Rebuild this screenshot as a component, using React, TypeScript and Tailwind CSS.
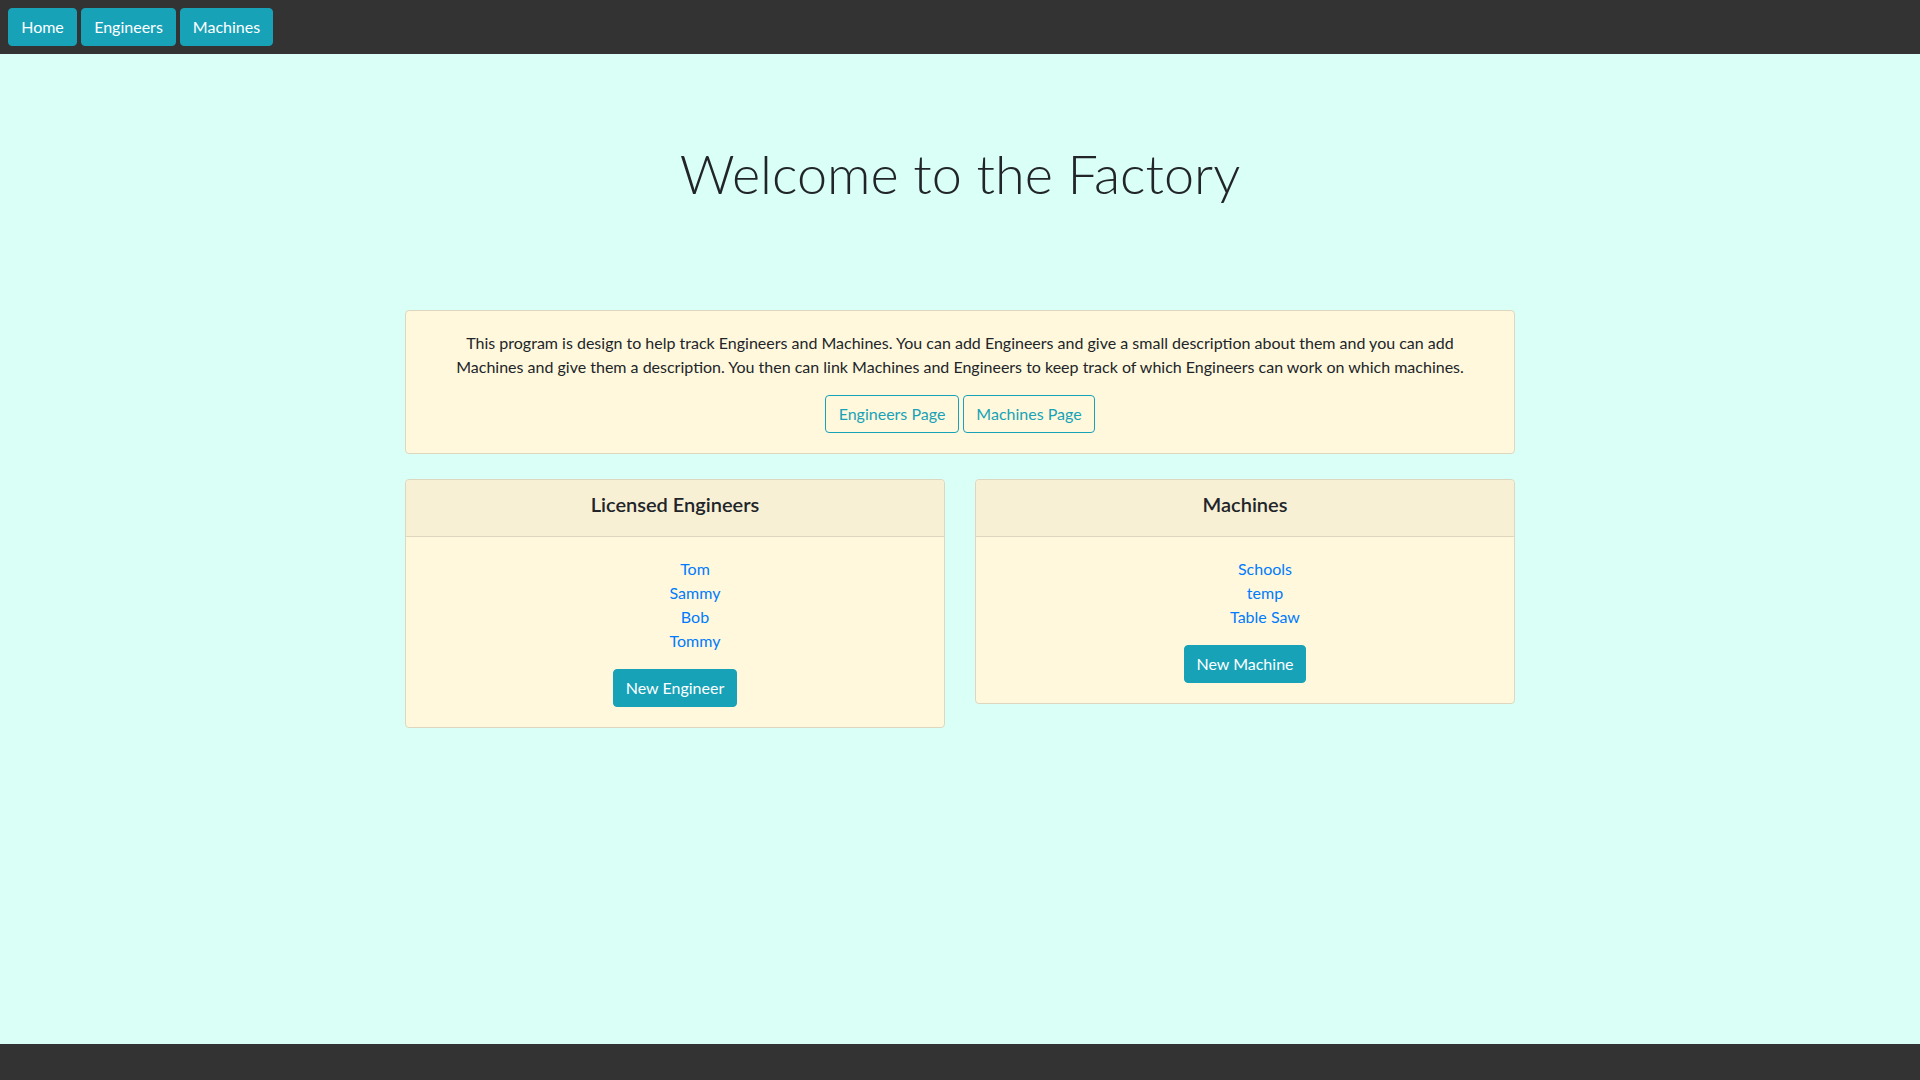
const ENGINEERS = ['Tom', 'Sammy', 'Bob', 'Tommy'];
const MACHINES = ['Schools', 'temp', 'Table Saw'];

const NAV = [
  { label: 'Home', w: 'w-[69px]' },
  { label: 'Engineers', w: 'w-[95px]' },
  { label: 'Machines', w: 'w-[93px]' },
];

function ListCard({ title, items, action, actionW }: { title: string; items: string[]; action: string; actionW: string }) {
  return (
    <div className="border border-[#ddd7bf] rounded bg-[#fff8dc] self-start">
      <div className="bg-[#f8f0d5] border-b border-[#ddd7bf] px-5 pt-3 pb-3 text-center rounded-t">
        <h5 className="text-[20px] leading-6 font-semibold mb-2">{title}</h5>
      </div>
      <div className="p-5 text-center">
        <ul className="pl-10 mb-4">
          {items.map(i => (
            <li key={i} className="leading-6">
              <a href="#" className="text-[#007bff]">{i}</a>
            </li>
          ))}
        </ul>
        <button className={'h-[38px] rounded bg-[#17a2b8] border border-[#17a2b8] text-white leading-6 ' + actionW}>{action}</button>
      </div>
    </div>
  );
}

export default function App() {
  return (
    <div className="min-h-screen flex flex-col bg-[#d9fff7] text-[#212529] text-base font-['Lato','Open_Sans',sans-serif]">
      <nav className="h-[54px] bg-[#333333] px-2 flex items-center gap-1">
        {NAV.map(n => (
          <button key={n.label} className={'h-[38px] rounded bg-[#17a2b8] border border-[#17a2b8] text-white leading-6 ' + n.w}>
            {n.label}
          </button>
        ))}
      </nav>

      <main className="flex-1">
        <div className="mx-auto w-[1110px]">
          <h1 className="pt-[86px] text-center text-[54px] leading-[67px] font-light">Welcome to the Factory</h1>

          <div className="mt-[103px] border border-[#ddd7bf] rounded bg-[#fff8dc] p-5 text-center">
            <p className="leading-6 mb-4 px-[12px]">
              This program is design to help track Engineers and Machines. You can add Engineers and give a small description about them and you can add Machines and give them a description. You then can link Machines and Engineers to keep track of which Engineers can work on which machines.
            </p>
            <div className="flex justify-center gap-1">
              <button className="h-[38px] w-[134px] rounded border border-[#17a2b8] text-[#17a2b8] leading-6">Engineers Page</button>
              <button className="h-[38px] w-[132px] rounded border border-[#17a2b8] text-[#17a2b8] leading-6">Machines Page</button>
            </div>
          </div>

          <div className="mt-[25px] grid grid-cols-2 gap-[30px] items-start">
            <ListCard title="Licensed Engineers" items={ENGINEERS} action="New Engineer" actionW="w-[124px]" />
            <ListCard title="Machines" items={MACHINES} action="New Machine" actionW="w-[122px]" />
          </div>
        </div>
      </main>

      <footer className="h-9 bg-[#333333]" />
    </div>
  );
}
